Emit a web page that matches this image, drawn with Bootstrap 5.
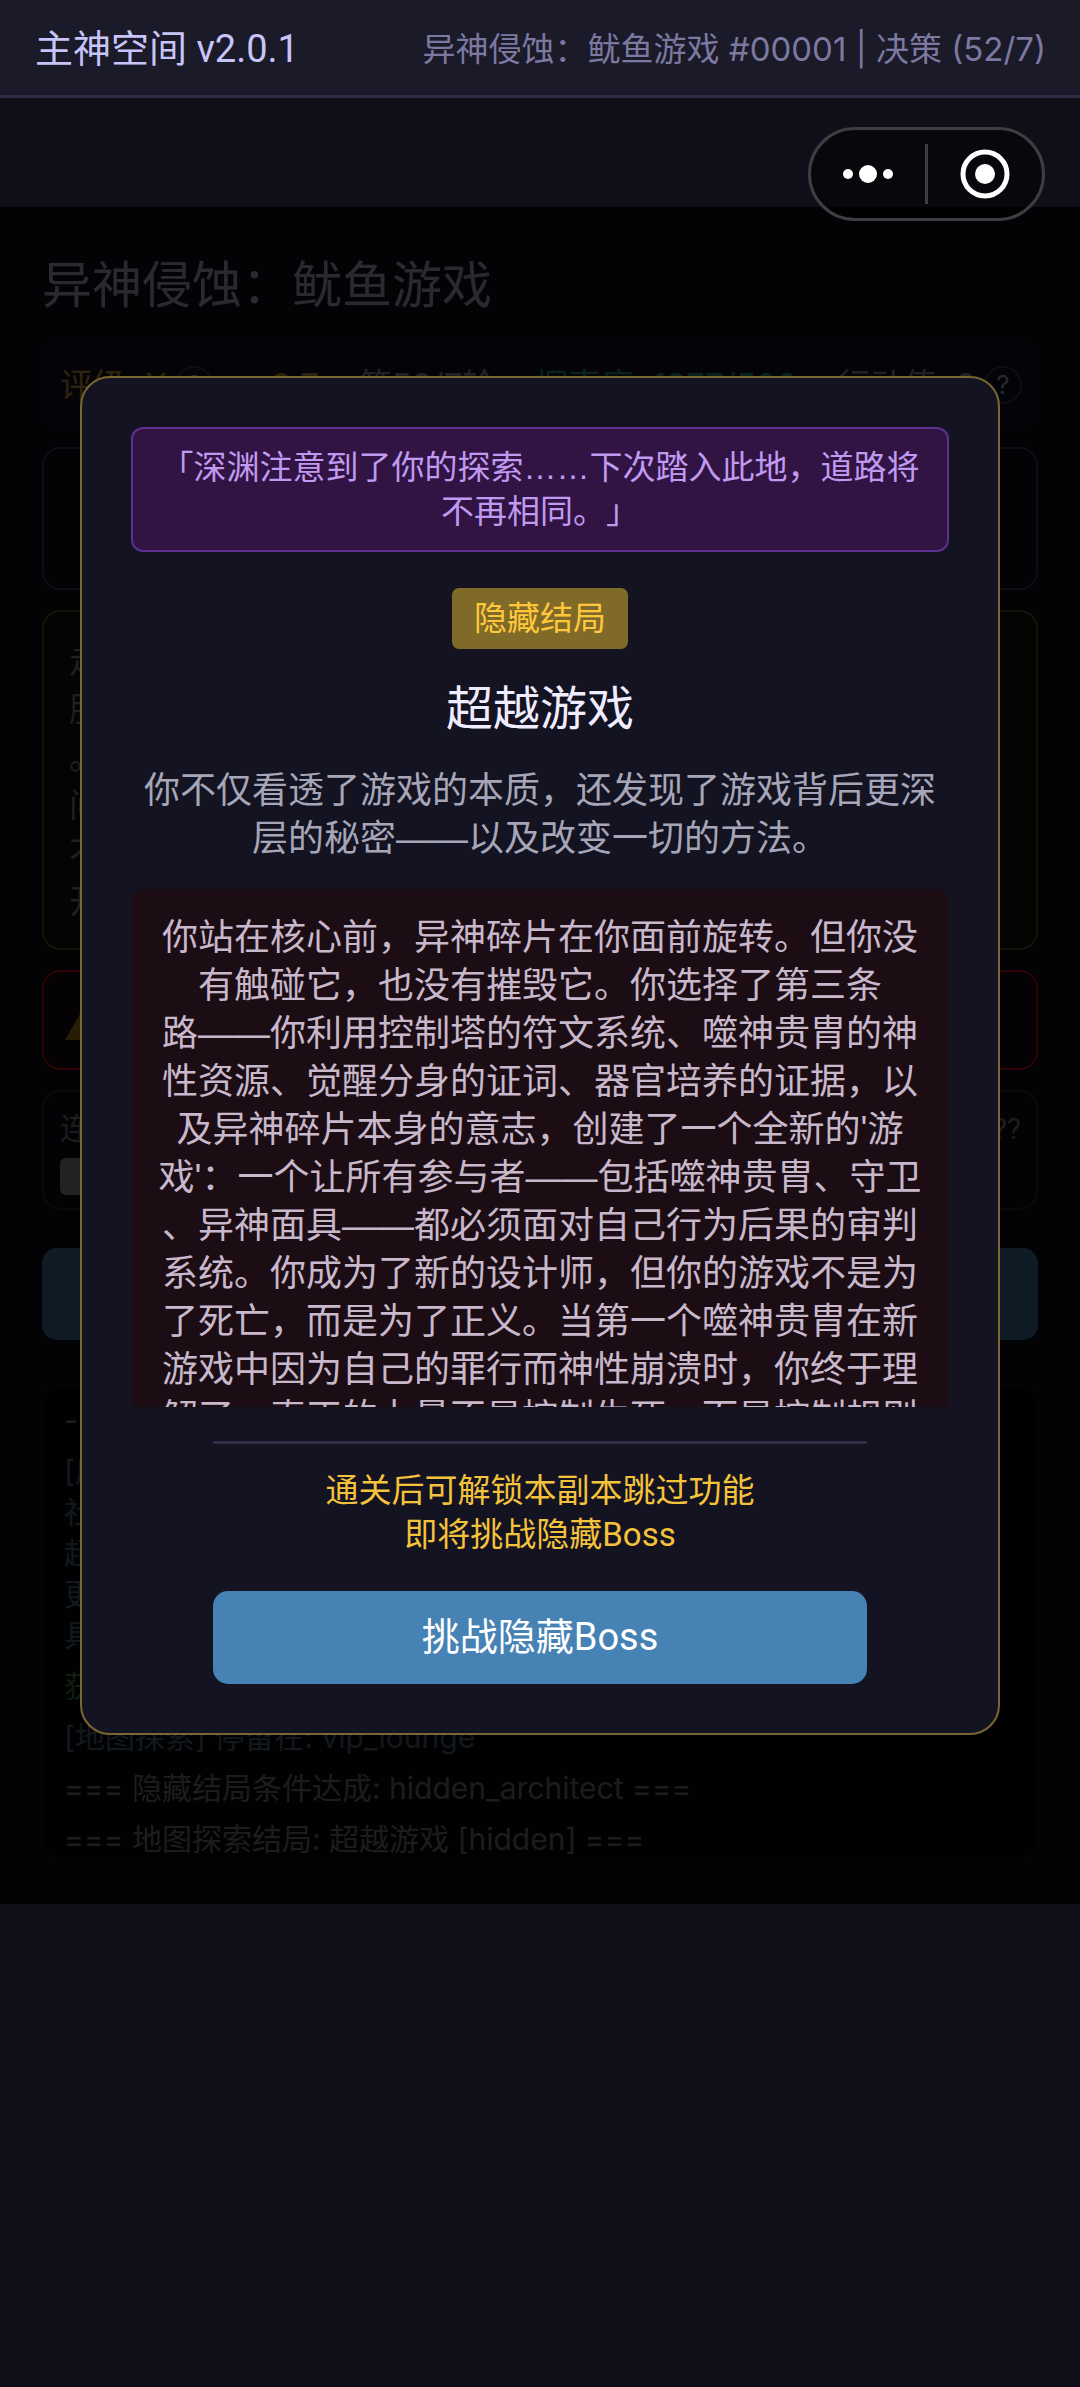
<!DOCTYPE html>
<html lang="zh-CN">
<head>
<meta charset="utf-8">
<meta name="viewport" content="width=device-width, initial-scale=1">
<title>主神空间 v2.0.1</title>
<link href="https://cdn.jsdelivr.net/npm/bootstrap@5.3.0/dist/css/bootstrap.min.css" rel="stylesheet">
<style>
  body { background: #0f0f19; color: #e0dcf0; font-family: Roboto, "Noto Sans CJK SC", sans-serif; font-size: 30px; line-height: 41px; text-spacing-trim: space-all; }
  .prose-cjk { font-family: "Liberation Sans", "Noto Sans CJK SC", sans-serif; }
  .wide-latin { font-family: Inter, "Noto Sans CJK SC", sans-serif; }
  .topbar { height: 98px; padding: 3px 34px 0 35px; background: #1a1a28; border-bottom: 3px solid #2d2b45; margin-bottom: 109px; }
  .brand-name { font-size: 38px; color: #c8c4fa; }
  .top-info { font-size: 33px; color: #7c78a0; }

  /* floating capsule menu */
  .capsule { top: 127px; right: 35px; width: 237px; height: 94px; z-index: 30; border: 3px solid #3d3d42; border-radius: 47px; background: rgba(0, 0, 0, .5); }
  .capsule button { flex: 1; height: 100%; border: 0; background: none; padding: 0; }
  .capsule-line { width: 3px; height: 60px; background: #3d3d42; }

  .stage { padding: 44px 42px; }
  .stage-title { font-size: 50px; line-height: 70px; margin: 0 0 20px; color: #d6cee6; }
  .panel { border: 2px solid #44446a; border-radius: 18px; margin-bottom: 20px; }
  .status-row { height: 86px; padding: 2px 14px 0 16px; background: #16162a; border-color: #16162a; font-size: 33px; color: #a8a8b8; white-space: nowrap; }
  .gold-text { color: #e0b040; }
  .green-text { color: #2fae82; }
  .help-dot { width: 38px; height: 38px; border: 2px solid #44445e; border-radius: 50%; background: #101828; color: #c8c8d8; font-size: 26px; line-height: 30px; padding: 0; }
  .panel-map { height: 143px; }
  .panel-story { height: 340px; padding: 26px 25px; font-size: 33px; line-height: 48px; background: #14140e; border-color: #605828; color: #9a9a90; }
  .panel-warn { height: 100px; padding: 0 20px; border-color: #e01818; background: #160c14; }
  .panel-link { height: 120px; padding: 16px 15px 0 16px; border-color: #36363e; color: #8a8a90; margin-bottom: 38px; }
  .link-chip { width: 120px; height: 37px; border-radius: 6px; background: #b0b0b4; margin-top: 9px; }
  .main-btn { height: 92px; border-radius: 15px; background: #4682b4; border: 0; color: #fff; font-size: 38px; }
  .log-box { height: 475px; margin: 45px 0 0; padding: 13px 20px 0; border-color: #16161e; background: #08080c; overflow: hidden; color: #8a8a90; }
  .log-box p { margin: 0 0 10px; }
  .log-blue { color: #5a7890; }
  .log-box .log-green { color: #4a9a4a; }

  .shade { inset: 0; padding: 0 80px; background: rgba(0, 0, 0, .8); z-index: 10; }
  .ending { border: 2px solid #7a6632; border-radius: 30px; background: #131321; padding: 49px; }
  .omen { border: 2px solid #5e3090; border-radius: 12px; background: #311443; color: #c09af0; font-size: 33px; line-height: 44px; padding: 17px 20px 16px; }
  .ending-tag { margin-top: 36px; padding: 9px 22px 8px; border-radius: 7px; background: #806a28; color: #ffc83c; font-size: 33px; line-height: 44px; }
  .ending-name { margin: 30px 0 28px; font-size: 47px; line-height: 60px; color: #f0ecff; }
  .ending-desc { margin: 0 0 26px; font-size: 36px; line-height: 48px; color: #a6a6b8; }
  .ending-story { max-height: 518px; overflow-y: auto; scrollbar-width: none; padding: 25px 20px; border-radius: 12px 12px 0 0; background: #1c0d14; color: #c8b8cc; font-size: 36px; line-height: 48px; white-space: nowrap; }
  .ending-story::-webkit-scrollbar { display: none; }
  .ending-rule { width: 80%; height: 3px; margin: 34px 0 25px; border: 0; background: #2f2d48; opacity: 1; }
  .ending-hint { margin: 0 0 34px; font-size: 33px; line-height: 44px; color: #f5c23c; }
  .boss-btn { width: 80%; height: 93px; border: 0; border-radius: 15px; background: #4682b4; color: #fff; font-size: 38px; }
</style>
<script src="https://cdn.jsdelivr.net/npm/bootstrap@5.3.0/dist/js/bootstrap.bundle.min.js"></script>
</head>
<body class="position-relative">

<header class="topbar d-flex align-items-center justify-content-between">
  <span class="brand-name">主神空间 v2.0.1</span>
  <span class="top-info wide-latin">异神侵蚀：鱿鱼游戏 #00001 | 决策 (52/7)</span>
</header>

<div class="capsule position-absolute d-flex align-items-center">
  <button type="button" class="d-flex align-items-center justify-content-center" aria-label="更多">
    <svg width="50" height="20" viewBox="0 0 50 20" fill="#fff"><circle cx="5" cy="10" r="5"/><circle cx="25" cy="10" r="9"/><circle cx="45" cy="10" r="5"/></svg>
  </button>
  <span class="capsule-line"></span>
  <button type="button" class="d-flex align-items-center justify-content-center" aria-label="关闭">
    <svg width="50" height="50" viewBox="0 0 50 50"><circle cx="25" cy="25" r="22" fill="none" stroke="#fff" stroke-width="5"/><circle cx="25" cy="25" r="10" fill="#fff"/></svg>
  </button>
</div>

<main class="stage position-relative">
  <h1 class="stage-title fw-normal">异神侵蚀：鱿鱼游戏</h1>

  <section class="panel status-row wide-latin d-flex align-items-center justify-content-between">
    <span class="gold-text d-flex align-items-center gap-2">评级: X <button type="button" class="help-dot">?</button></span>
    <span class="gold-text">x2.7</span>
    <span>第52/7轮</span>
    <span class="green-text">探索度: 1977/500</span>
    <span class="d-flex align-items-center gap-2">行动值: 0 <button type="button" class="help-dot">?</button></span>
  </section>

  <section class="panel panel-map"></section>
  <section class="panel panel-story prose-cjk">走廊里<br>服务人员<br>。你们<br>间里<br>不再<br>开始</section>
  <section class="panel panel-warn d-flex align-items-center">
    <svg width="48" height="42" viewBox="0 0 48 42"><path d="M24 1 47 41H1Z" fill="#c09020"/><path d="M22 14h4v14h-4zM22 32h4v4h-4z" fill="#221a08"/></svg>
  </section>
  <section class="panel panel-link">
    <div class="d-flex justify-content-between"><span>连接</span><span>???</span></div>
    <div class="link-chip"></div>
  </section>

  <button type="button" class="main-btn w-100 d-block">继续</button>

  <section class="panel log-box wide-latin">
    <p>---</p>
    <p class="log-blue">[房间]<br>社会<br>超越<br>更深<br>具有</p>
    <p class="log-green">获得</p>
    <p class="log-blue">[地图探索] 停留在: vip_lounge</p>
    <p>=== 隐藏结局条件达成: hidden_architect ===</p>
    <p>=== 地图探索结局: 超越游戏 [hidden] ===</p>
  </section>

  <div class="shade position-absolute d-flex align-items-center">
    <div class="ending w-100 d-flex flex-column align-items-center text-center" role="dialog" aria-labelledby="endingName">
      <div class="omen prose-cjk w-100">「深渊注意到了你的探索……下次踏入此地，道路将<br>不再相同。」</div>
      <span class="ending-tag">隐藏结局</span>
      <h2 class="ending-name fw-normal" id="endingName">超越游戏</h2>
      <p class="ending-desc prose-cjk">你不仅看透了游戏的本质，还发现了游戏背后更深<br>层的秘密——以及改变一切的方法。</p>
      <div class="ending-story prose-cjk w-100">你站在核心前，异神碎片在你面前旋转。但你没<br>有触碰它，也没有摧毁它。你选择了第三条<br>路——你利用控制塔的符文系统、噬神贵胄的神<br>性资源、觉醒分身的证词、器官培养的证据，以<br>及异神碎片本身的意志，创建了一个全新的'游<br>戏'：一个让所有参与者——包括噬神贵胄、守卫<br>、异神面具——都必须面对自己行为后果的审判<br>系统。你成为了新的设计师，但你的游戏不是为<br>了死亡，而是为了正义。当第一个噬神贵胄在新<br>游戏中因为自己的罪行而神性崩溃时，你终于理<br>解了，真正的力量不是控制生死，而是控制规则</div>
      <hr class="ending-rule">
      <p class="ending-hint">通关后可解锁本副本跳过功能<br>即将挑战隐藏Boss</p>
      <button type="button" class="boss-btn">挑战隐藏Boss</button>
    </div>
  </div>
</main>

</body>
</html>
